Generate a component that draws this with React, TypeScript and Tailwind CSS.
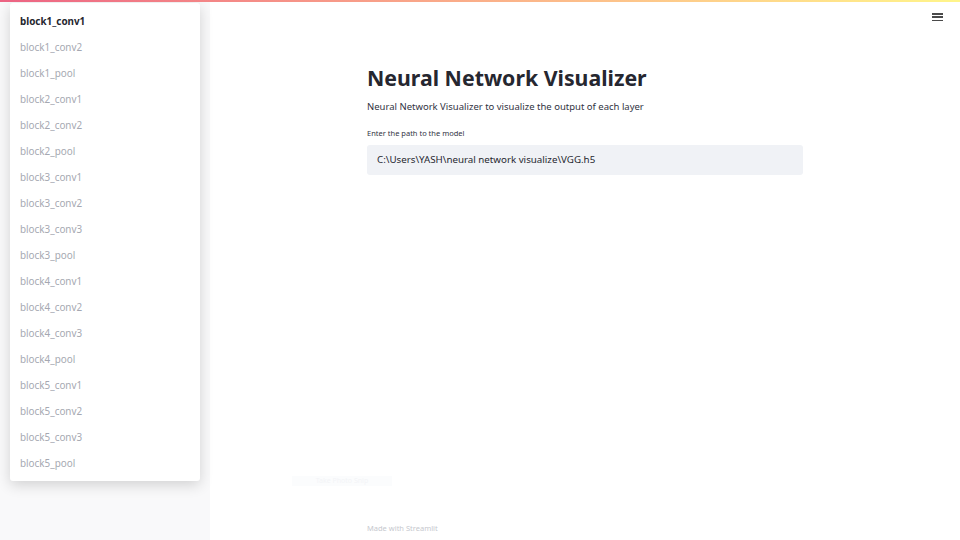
import React from 'react';

const layers = [
  'block1_conv1', 'block1_conv2', 'block1_pool',
  'block2_conv1', 'block2_conv2', 'block2_pool',
  'block3_conv1', 'block3_conv2', 'block3_conv3', 'block3_pool',
  'block4_conv1', 'block4_conv2', 'block4_conv3', 'block4_pool',
  'block5_conv1', 'block5_conv2', 'block5_conv3', 'block5_pool',
];

export default function App() {
  return (
    <div className="relative flex w-[960px] h-[540px] overflow-hidden bg-white" style={{ fontFamily: '"Noto Sans", "Open Sans", sans-serif' }}>
      {/* decoration bar */}
      <div className="absolute top-0 left-0 right-0 h-[2px] z-20 bg-gradient-to-r from-[#ec6383] to-[#fff58a]" />

      {/* sidebar */}
      <aside className="w-[210px] h-full bg-[#f9f9fa] shrink-0" />

      {/* main */}
      <main className="flex-1 flex flex-col items-center h-full">
        <div className="w-[436px] pt-[62px]">
          <h1 className="text-[21.3px] leading-[32px] font-bold text-[#262730]">Neural Network Visualizer</h1>
          <p className="mt-[5px] text-[9.5px] leading-[16px] text-[#31333f]">Neural Network Visualizer to visualize the output of each layer</p>
          <label className="block mt-[12px] text-[7.5px] leading-[12px] text-[#31333f]">Enter the path to the model</label>
          <div className="mt-[6px] h-[30px] rounded-[3px] bg-[#f0f2f6] flex items-center px-[10px] text-[9.75px] text-[#262730]">
            C:\Users\YASH\neural network visualize\VGG.h5
          </div>
        </div>
        <div className="flex-1" />
        <div className="w-[436px] pb-[6px] text-[7.5px] leading-[12px] text-[#c6c8ce]">Made with Streamlit</div>
      </main>

      {/* hamburger */}
      <button type="button" aria-label="Menu" className="absolute top-[12px] right-[17px] w-[11px] h-[10px] flex flex-col justify-between py-[1px]">
        <span className="block h-[1.5px] bg-[#4a4a4a]" />
        <span className="block h-[1.5px] bg-[#4a4a4a]" />
        <span className="block h-[1.5px] bg-[#4a4a4a]" />
      </button>

      {/* faint ghost button */}
      <div className="absolute left-[292px] top-[476px] w-[100px] h-[10px] bg-[#fbfcfd] text-[7px] leading-[10px] text-[#f3f4f7] text-center">Take Photo Snip</div>

      {/* dropdown popover */}
      <div className="absolute left-[10px] top-[3px] w-[190px] bg-white rounded-[3px] py-[5px] z-10 shadow-[0_4px_14px_rgba(0,0,0,0.16)]">
        {layers.map((l, i) => (
          <div key={l} className={`h-[26px] flex items-center px-[10px] text-[9.9px] ${i === 0 ? 'font-bold text-[#262730]' : 'text-[#a5a8b1]'}`}>
            {l}
          </div>
        ))}
      </div>
    </div>
  );
}
